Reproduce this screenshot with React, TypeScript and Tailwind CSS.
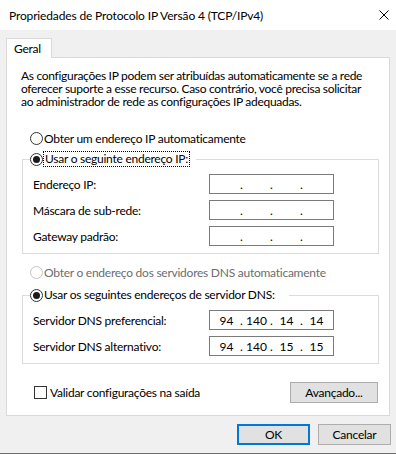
import React from 'react';

const Radio: React.FC<{ checked?: boolean; disabled?: boolean }> = ({ checked, disabled }) => (
    <span
        className={`flex h-[13px] w-[13px] shrink-0 items-center justify-center rounded-full border bg-white ${
            disabled ? 'border-[#c4c4c4]' : 'border-[#333333]'
        }`}
    >
        {checked && <span className="h-[7px] w-[7px] rounded-full bg-[#1a1a1a]" />}
    </span>
);

const IpField: React.FC<{ value?: string[] }> = ({ value }) => (
    <div className="flex h-[20px] w-[125px] shrink-0 items-center border border-[#7a7a7a] bg-white pl-[3px] tracking-normal">
        {[0, 1, 2, 3].map((i) => (
            <div key={i} className="flex w-[30px]">
                <span className="w-[27px] text-center">{value ? value[i] : ''}</span>
                {i < 3 && <span className="w-[3px]">.</span>}
            </div>
        ))}
    </div>
);

const Row: React.FC<{ label: string; value?: string[] }> = ({ label, value }) => (
    <div className="flex h-[20px] items-center justify-between">
        <span>{label}</span>
        <IpField value={value} />
    </div>
);

const App: React.FC = () => {
    return (
        <div className="h-[454px] w-[396px] overflow-hidden whitespace-nowrap border-b border-[#6e6e6e] bg-[#f0f0f0] font-['Lato',sans-serif] text-[12px] leading-[13px] tracking-[-0.25px] text-black">
            {/* Title bar */}
            <div className="flex h-[30px] items-center justify-between bg-white pl-[9px] pr-[7px]">
                <span className="tracking-[-0.15px]">Propriedades de Protocolo IP Versão 4 (TCP/IPv4)</span>
                <svg width="10" height="10" viewBox="0 0 10 10">
                    <path d="M0.5 0.5 L9.5 9.5 M9.5 0.5 L0.5 9.5" stroke="#000" strokeWidth="1" fill="none" />
                </svg>
            </div>

            <div className="px-[6px] pt-[8px]">
                {/* Tab */}
                <div className="relative z-10 -mb-px flex h-[20px] w-[46px] items-center border border-b-0 border-[#d9d9d9] bg-white pl-[7px]">
                    Geral
                </div>

                {/* Panel */}
                <div className="h-[359px] border border-[#d9d9d9] bg-white pl-[15px] pr-[10px] pt-[11px]">
                    <div className="-ml-px flex flex-col tracking-[-0.3px]">
                        <span className="h-[13px]">As configurações IP podem ser atribuídas automaticamente se a rede</span>
                        <span className="h-[13px]">oferecer suporte a esse recurso. Caso contrário, você precisa solicitar</span>
                        <span className="h-[13px]">ao administrador de rede as configurações IP adequadas.</span>
                    </div>

                    <div className="ml-[8px] mt-[24px] flex h-[13px] items-center gap-[1px]">
                        <Radio />
                        <span>Obter um endereço IP automaticamente</span>
                    </div>

                    <fieldset className="mt-[6px] border border-[#dcdcdc]">
                        <legend className="ml-[7px] pr-[6px]">
                            <span className="flex items-center">
                                <Radio checked />
                                <span className="border border-dotted border-black px-[1px] pb-px">Usar o seguinte endereço IP:</span>
                            </span>
                        </legend>
                        <div className="flex flex-col gap-[6px] pb-[7px] pl-[10px] pr-[44px] pt-[7px]">
                            <Row label="Endereço IP:" />
                            <Row label="Máscara de sub-rede:" />
                            <Row label="Gateway padrão:" />
                        </div>
                    </fieldset>

                    <div className="ml-[8px] mt-[12px] flex h-[13px] items-center gap-[1px] text-[#6d6d6d]">
                        <Radio disabled />
                        <span>Obter o endereço dos servidores DNS automaticamente</span>
                    </div>

                    <fieldset className="mt-[8px] border border-[#dcdcdc]">
                        <legend className="ml-[7px] pr-[14px]">
                            <span className="flex items-center gap-[1px] py-px">
                                <Radio checked />
                                <span className="pb-px">Usar os seguintes endereços de servidor DNS:</span>
                            </span>
                        </legend>
                        <div className="flex flex-col gap-[6px] pb-[7px] pl-[10px] pr-[44px] pt-[7px]">
                            <Row label="Servidor DNS preferencial:" value={['94', '140', '14', '14']} />
                            <Row label="Servidor DNS alternativo:" value={['94', '140', '15', '15']} />
                        </div>
                    </fieldset>

                    <div className="mr-[1px] mt-[18px] flex h-[21px] items-center justify-between">
                        <div className="ml-[12px] flex items-center gap-[3px]">
                            <span className="h-[13px] w-[13px] border border-[#333333] bg-white" />
                            <span>Validar configurações na saída</span>
                        </div>
                        <button className="h-[21px] w-[88px] border border-[#adadad] bg-[#e1e1e1]">Avançado...</button>
                    </div>
                </div>
            </div>

            {/* Dialog buttons */}
            <div className="mt-[8px] flex justify-end gap-[8px] pr-[5px]">
                <button className="h-[21px] w-[73px] border-2 border-[#0078d7] bg-[#e1e1e1]">OK</button>
                <button className="h-[21px] w-[73px] border border-[#adadad] bg-[#e1e1e1]">Cancelar</button>
            </div>
        </div>
    );
};

export default App;
